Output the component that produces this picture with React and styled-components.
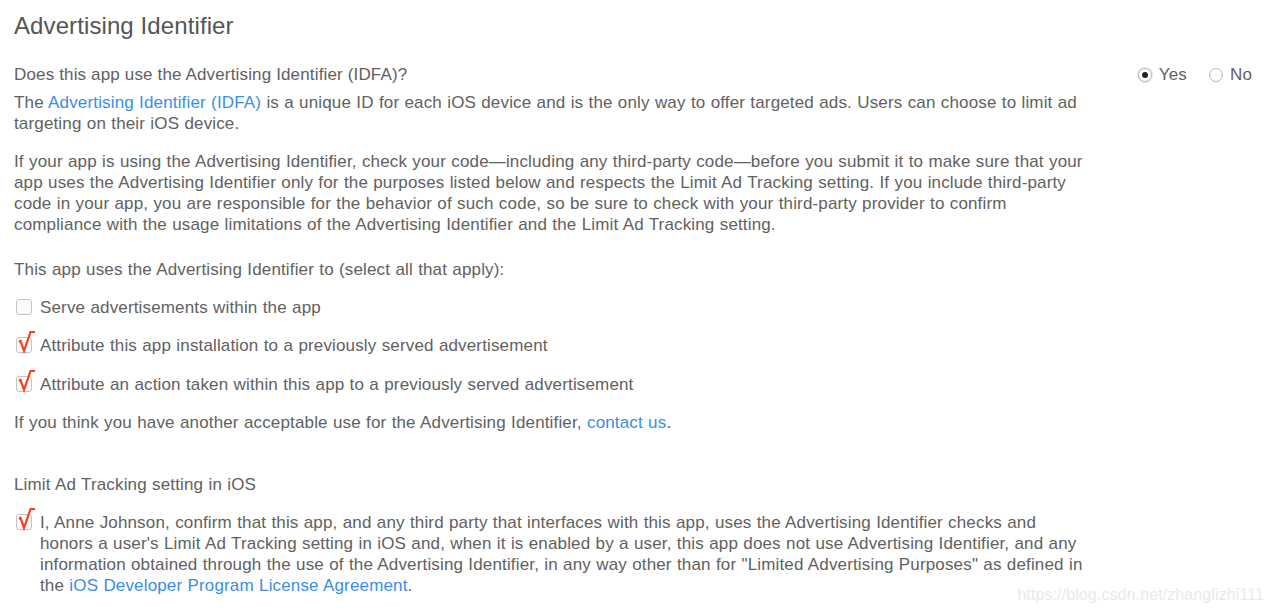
import React, { useState } from 'react';
import styled, { createGlobalStyle } from 'styled-components';

const GlobalStyle = createGlobalStyle`
  html, body { margin: 0; padding: 0; background: #fff; }
  body {
    font-family: "Liberation Sans", Arial, sans-serif;
    color: #616161;
    -webkit-font-smoothing: antialiased;
  }
`;

const Page = styled.div`
  position: relative;
  width: 1272px;
  height: 612px;
  padding: 11px 18px 0 14px;
  box-sizing: border-box;
  overflow: hidden;
`;

const Title = styled.h1`
  margin: 0 0 23px;
  font-size: 24px;
  font-weight: 400;
  line-height: 30px;
  color: #555;
  letter-spacing: 0.1px;
`;

const QuestionRow = styled.div`
  display: flex;
  justify-content: space-between;
  align-items: center;
  font-size: 17px;
  line-height: 21px;
  letter-spacing: 0.15px;
`;

const Radios = styled.div`
  display: flex;
  gap: 22px;
  padding-right: 2px;
`;

const RadioLabel = styled.label`
  display: flex;
  align-items: center;
  gap: 7px;
  cursor: pointer;
`;

const RadioDot = styled.span`
  width: 14px;
  height: 14px;
  border-radius: 50%;
  border: 1px solid #b9b9b9;
  box-sizing: border-box;
  display: flex;
  align-items: center;
  justify-content: center;
  background: #fff;
  box-shadow: ${p => (p.$on ? '0 0 0 1px #dfe8f5' : 'none')};
  &::after {
    content: '';
    width: 6px;
    height: 6px;
    border-radius: 50%;
    background: ${p => (p.$on ? '#222' : 'transparent')};
  }
`;

const Text = styled.p`
  margin: ${p => p.$m || '0'};
  font-size: 17px;
  line-height: 21px;
  letter-spacing: 0.15px;
  word-spacing: 0.4px;
  max-width: 1073px;
`;

const A = styled.a`
  color: #3a8ee6;
  text-decoration: none;
`;

const CheckRow = styled.label`
  display: flex;
  align-items: flex-start;
  gap: 8px;
  margin: ${p => p.$m || '0'};
  font-size: 17px;
  line-height: 21px;
  letter-spacing: 0.15px;
  word-spacing: 0.4px;
  max-width: 1073px;
  cursor: pointer;
`;

const BoxWrap = styled.span`
  position: relative;
  flex: 0 0 auto;
  width: 16px;
  height: 16px;
  margin: 2px 0 0 2px;
`;

const Box = styled.span`
  display: block;
  width: 16px;
  height: 16px;
  box-sizing: border-box;
  border: 1px solid #c4c4c4;
  border-radius: 3px;
  background: #fafafa;
`;

const Tick = styled.svg`
  position: absolute;
  left: 1px;
  top: -6px;
  width: 20px;
  height: 22px;
  overflow: visible;
`;

const Watermark = styled.div`
  position: absolute;
  right: 8px;
  bottom: 8px;
  font-size: 16px;
  color: #e9e9e9;
  letter-spacing: 0.1px;
`;

function Check({ on, children, m }) {
  return (
    <CheckRow $m={m}>
      <BoxWrap>
        <Box />
        {on && (
          <Tick viewBox="0 0 20 22">
            <path d="M2 11 L3.5 10 L7 20 L13.5 1 L18 1" fill="none" stroke="#f4401c" strokeWidth="2.2" strokeLinejoin="miter" />
          </Tick>
        )}
      </BoxWrap>
      <span>{children}</span>
    </CheckRow>
  );
}

export default function App() {
  const [idfa, setIdfa] = useState('yes');
  return (
    <>
      <GlobalStyle />
      <Page>
        <Title>Advertising Identifier</Title>
        <QuestionRow>
          <span>Does this app use the Advertising Identifier (IDFA)?</span>
          <Radios>
            <RadioLabel onClick={() => setIdfa('yes')}>
              <RadioDot $on={idfa === 'yes'} />Yes
            </RadioLabel>
            <RadioLabel onClick={() => setIdfa('no')}>
              <RadioDot $on={idfa === 'no'} />No
            </RadioLabel>
          </Radios>
        </QuestionRow>
        <Text $m="7px 0 17px">
          The <A href="#">Advertising Identifier (IDFA)</A> is a unique ID for each iOS device and is the only way to offer targeted ads. Users can choose to limit ad targeting on their iOS device.
        </Text>
        <Text $m="0 0 24px">
          If your app is using the Advertising Identifier, check your code—including any third-party code—before you submit it to make sure that your app uses the Advertising Identifier only for the purposes listed below and respects the Limit Ad Tracking setting. If you include third-party code in your app, you are responsible for the behavior of such code, so be sure to check with your third-party provider to confirm compliance with the usage limitations of the Advertising Identifier and the Limit Ad Tracking setting.
        </Text>
        <Text $m="0 0 17px">This app uses the Advertising Identifier to (select all that apply):</Text>
        <Check m="0 0 17px">Serve advertisements within the app</Check>
        <Check on m="0 0 18px">Attribute this app installation to a previously served advertisement</Check>
        <Check on m="0 0 17px">Attribute an action taken within this app to a previously served advertisement</Check>
        <Text $m="0 0 41px">
          If you think you have another acceptable use for the Advertising Identifier, <A href="#">contact us</A>.
        </Text>
        <Text $m="0 0 17px">Limit Ad Tracking setting in iOS</Text>
        <Check on>
          I, Anne Johnson, confirm that this app, and any third party that interfaces with this app, uses the Advertising Identifier checks and honors a user's Limit Ad Tracking setting in iOS and, when it is enabled by a user, this app does not use Advertising Identifier, and any information obtained through the use of the Advertising Identifier, in any way other than for "Limited Advertising Purposes" as defined in the <A href="#">iOS Developer Program License Agreement</A>.
        </Check>
        <Watermark>https://blog.csdn.net/zhanglizhi111</Watermark>
      </Page>
    </>
  );
}
